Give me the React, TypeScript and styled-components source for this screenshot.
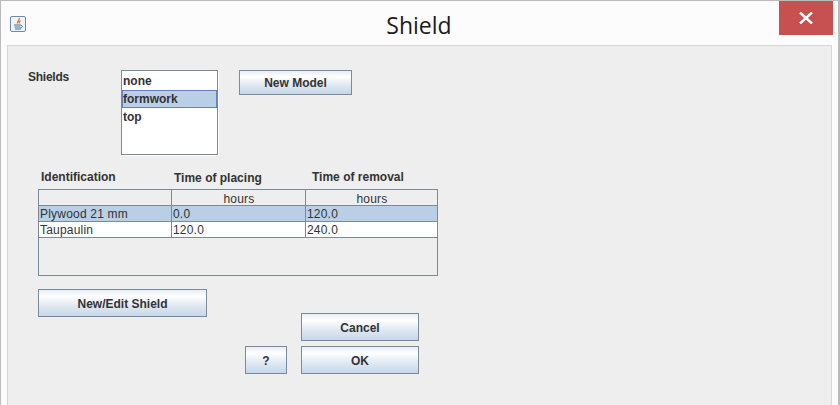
import * as React from "react";
import styled, { createGlobalStyle } from "styled-components";

const GlobalStyle = createGlobalStyle`
html, body {
  margin: 0;
  padding: 0;
  background: #fcfcfc;
}
body {
  font-family: "Liberation Sans", Arial, sans-serif;
  font-size: 12px;
  color: #333333;
}
`;

const Window = styled.div`
  box-sizing: border-box;
  width: 840px;
  height: 405px;
  overflow: hidden;
  background: #fcfcfc;
  border: 1px solid #bbbbbb;
  border-bottom: none;
  border-right-width: 2px;
  padding: 0 6px 0 6px;
  display: flex;
  flex-direction: column;
`;

const TitleBar = styled.div`
  height: 44px;
  flex: none;
  margin: 0 -6px;
  display: flex;
  align-items: flex-start;
`;

const AppIcon = styled.svg`
  flex: none;
  width: 16px;
  height: 16px;
  margin: 15px 0 0 9px;
`;

const Title = styled.div`
  flex: 1;
  text-align: center;
  font-family: "Open Sans", "Noto Sans", sans-serif;
  font-size: 23px;
  line-height: 48px;
  color: #1a1a1a;
  padding-left: 33px;
`;

const CloseButton = styled.div`
  flex: none;
  width: 54px;
  height: 34px;
  margin-right: 5px;
  background: #c75050;
  display: flex;
  align-items: center;
  justify-content: center;
`;

const Panel = styled.div`
  flex: 1;
  border: 1px solid #d6d6d6;
  border-bottom: none;
  background: #eeeeee;
  padding: 24px 0 0 20px;
`;

const TopRow = styled.div`
  display: flex;
  align-items: flex-start;
  height: 85px;
`;

const FieldLabel = styled.div`
  width: 93px;
  flex: none;
  font-weight: bold;
  line-height: 14px;
  letter-spacing: -0.25px;
`;

const ListBox = styled.div`
  box-sizing: border-box;
  width: 97px;
  height: 85px;
  flex: none;
  background: #ffffff;
  border: 1px solid #7a8a99;
  box-shadow: 1px 1px 0 #ffffff;
  padding-top: 1px;
`;

const ListItem = styled.div<{ $selected?: boolean }>`
  box-sizing: border-box;
  height: 18px;
  line-height: 16px;
  font-weight: bold;
  border: 1px solid ${(p) => (p.$selected ? "#6382bf" : "transparent")};
  background: ${(p) => (p.$selected ? "#b8cfe5" : "transparent")};
`;

const Button = styled.div<{ $width: number; $height: number }>`
  box-sizing: border-box;
  flex: none;
  width: ${(p) => p.$width}px;
  height: ${(p) => p.$height}px;
  padding-top: 1px;
  border: 1px solid #7a8a99;
  background: linear-gradient(#e6edf5 0%, #ffffff 24%, #dfe8f2 62%, #c6d7e9 100%);
  font-weight: bold;
  display: flex;
  align-items: center;
  justify-content: center;
`;

const ModelButtonSlot = styled.div`
  margin-left: 21px;
`;

const ColumnLabels = styled.div`
  display: grid;
  grid-template-columns: 133px 138px 140px;
  margin: 14px 0 0 13px;
  height: 20px;
  font-weight: bold;
`;

const ColumnLabel = styled.div<{ $top: number }>`
  line-height: 14px;
  padding-top: ${(p) => p.$top}px;
  white-space: nowrap;
`;

const TableFrame = styled.div`
  box-sizing: border-box;
  width: 400px;
  height: 87px;
  margin-left: 10px;
  border: 1px solid #7a8a99;
`;

const TableRow = styled.div<{ $selected?: boolean; $white?: boolean; $header?: boolean }>`
  box-sizing: border-box;
  display: grid;
  grid-template-columns: 132px 134px 1fr;
  height: 16px;
  border-bottom: 1px solid #7a8a99;
  line-height: ${(p) => (p.$header ? "18px" : "16px")};
  background: ${(p) => (p.$selected ? "#b8cfe5" : p.$white ? "#ffffff" : "#eeeeee")};
`;

const Cell = styled.div<{ $center?: boolean }>`
  box-sizing: border-box;
  padding-left: 1px;
  font-size: 12px;
  letter-spacing: 0.2px;
  white-space: nowrap;
  text-align: ${(p) => (p.$center ? "center" : "left")};
  & + & {
    border-left: 1px solid #7a8a99;
  }
`;

const BottomArea = styled.div`
  display: flex;
  align-items: flex-start;
  margin: 13px 0 0 10px;
`;

const DialogActions = styled.div`
  margin: 24px 0 0 38px;
  display: flex;
  flex-direction: column;
  align-items: flex-end;
  gap: 5px;
`;

const ActionRow = styled.div`
  display: flex;
  gap: 14px;
`;

function JavaIcon() {
  return (
    <AppIcon viewBox="0 0 16 16">
      <rect x="0.5" y="0.5" width="15" height="15" rx="1.5" fill="#eef3f8" stroke="#6f8aa3" />
      <path d="M9 2C10.5 4 6.5 5 7.5 7.5M10.5 4.5C9 5.5 8.5 6 9.5 7.5" fill="none" stroke="#e8771a" strokeWidth="1.3" />
      <path d="M4 9h7M4.5 11h6M5 13h6M11 9.5c2 0 2 2-.5 2.5" fill="none" stroke="#4d6f91" strokeWidth="1" />
    </AppIcon>
  );
}

export default function App() {
  return (
    <>
      <GlobalStyle />
      <Window>
        <TitleBar>
          <JavaIcon />
          <Title>Shield</Title>
          <CloseButton>
            <svg width="14" height="12" viewBox="0 0 14 12">
              <path d="M1 0.5L13 11.5M13 0.5L1 11.5" stroke="#ffffff" strokeWidth="2.4" fill="none" />
            </svg>
          </CloseButton>
        </TitleBar>
        <Panel>
          <TopRow>
            <FieldLabel>Shields</FieldLabel>
            <ListBox>
              <ListItem>none</ListItem>
              <ListItem $selected>formwork</ListItem>
              <ListItem>top</ListItem>
            </ListBox>
            <ModelButtonSlot>
              <Button $width={113} $height={25}>New Model</Button>
            </ModelButtonSlot>
          </TopRow>
          <ColumnLabels>
            <ColumnLabel $top={1}>Identification</ColumnLabel>
            <ColumnLabel $top={2}>Time of placing</ColumnLabel>
            <ColumnLabel $top={1}>Time of removal</ColumnLabel>
          </ColumnLabels>
          <TableFrame>
            <TableRow $header>
              <Cell />
              <Cell $center>hours</Cell>
              <Cell $center>hours</Cell>
            </TableRow>
            <TableRow $selected>
              <Cell>Plywood 21 mm</Cell>
              <Cell>0.0</Cell>
              <Cell>120.0</Cell>
            </TableRow>
            <TableRow $white>
              <Cell>Taupaulin</Cell>
              <Cell>120.0</Cell>
              <Cell>240.0</Cell>
            </TableRow>
          </TableFrame>
          <BottomArea>
            <Button $width={169} $height={28}>New/Edit Shield</Button>
            <DialogActions>
              <Button $width={118} $height={28}>Cancel</Button>
              <ActionRow>
                <Button $width={42} $height={28}>?</Button>
                <Button $width={118} $height={28}>OK</Button>
              </ActionRow>
            </DialogActions>
          </BottomArea>
        </Panel>
      </Window>
    </>
  );
}
